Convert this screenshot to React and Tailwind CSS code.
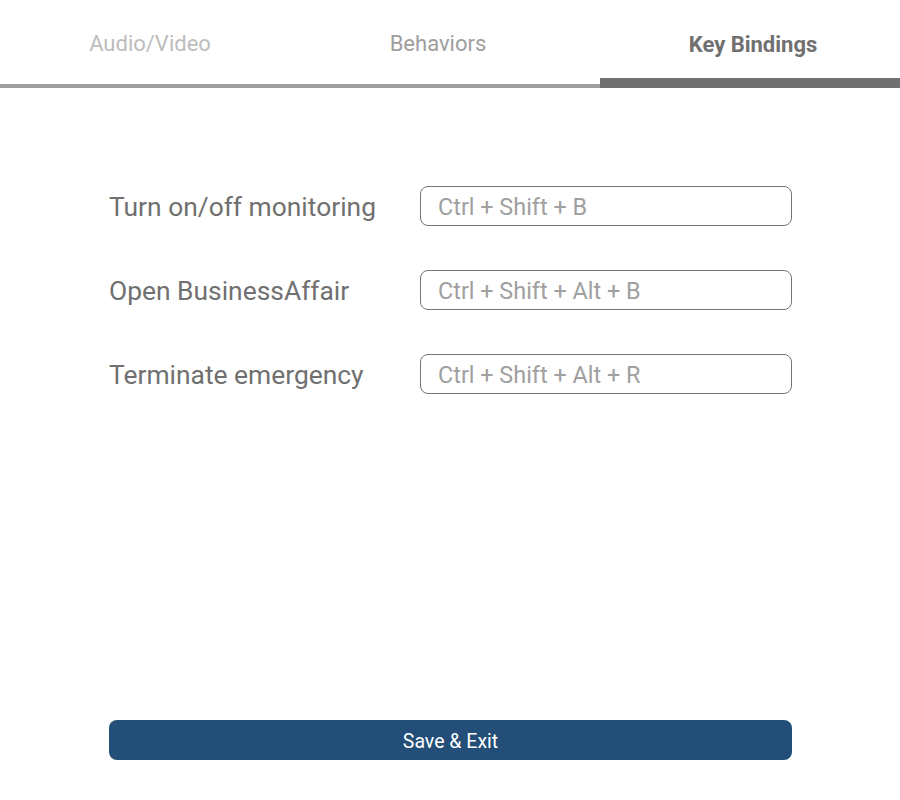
export default function App() {
  const rows = [
    ["Turn on/off monitoring", "Ctrl + Shift + B"],
    ["Open BusinessAffair", "Ctrl + Shift + Alt + B"],
    ["Terminate emergency", "Ctrl + Shift + Alt + R"],
  ];
  return (
    <div className="w-[900px] h-[800px] bg-white flex flex-col" style={{ fontFamily: "Roboto, sans-serif" }}>
      <div className="flex h-[88px]">
        <div className="w-[300px] flex flex-col">
          <div className="h-[84px] flex items-start justify-center pt-[27px] text-[22px] leading-[33px] text-[#bdbdbd]">Audio/Video</div>
          <div className="h-[4px] bg-[#9e9e9e]" />
        </div>
        <div className="w-[300px] flex flex-col">
          <div className="h-[84px] flex items-start justify-center pt-[27px] pr-[24px] text-[22px] leading-[33px] text-[#9e9e9e]">Behaviors</div>
          <div className="h-[4px] bg-[#9e9e9e]" />
        </div>
        <div className="w-[300px] flex flex-col">
          <div className="h-[78px] flex items-start justify-center pt-[28px] pl-[6px] text-[22px] leading-[33px] font-bold text-[#707070]">Key Bindings</div>
          <div className="h-[10px] bg-[#707070]" />
        </div>
      </div>
      <div className="flex flex-col gap-[44px] pt-[98px] pl-[109px]">
        {rows.map(([label, keys]) => (
          <div key={label} className="flex items-center h-[40px]">
            <div className="w-[311px] text-[26.4px] leading-[40px] text-[#707070] pt-[1px]">{label}</div>
            <div className="w-[372px] h-[40px] border border-[#757575] rounded-[8px] flex items-center pl-[17px] pt-[3px] text-[23.4px] text-[#a0a0a0]">{keys}</div>
          </div>
        ))}
      </div>
      <div className="flex-1" />
      <div className="pl-[109px] pb-[40px]">
        <button className="w-[683px] h-[40px] rounded-[8px] bg-[#224e78] text-white text-[19.5px] pt-[3px] flex items-center justify-center">Save &amp; Exit</button>
      </div>
    </div>
  );
}
